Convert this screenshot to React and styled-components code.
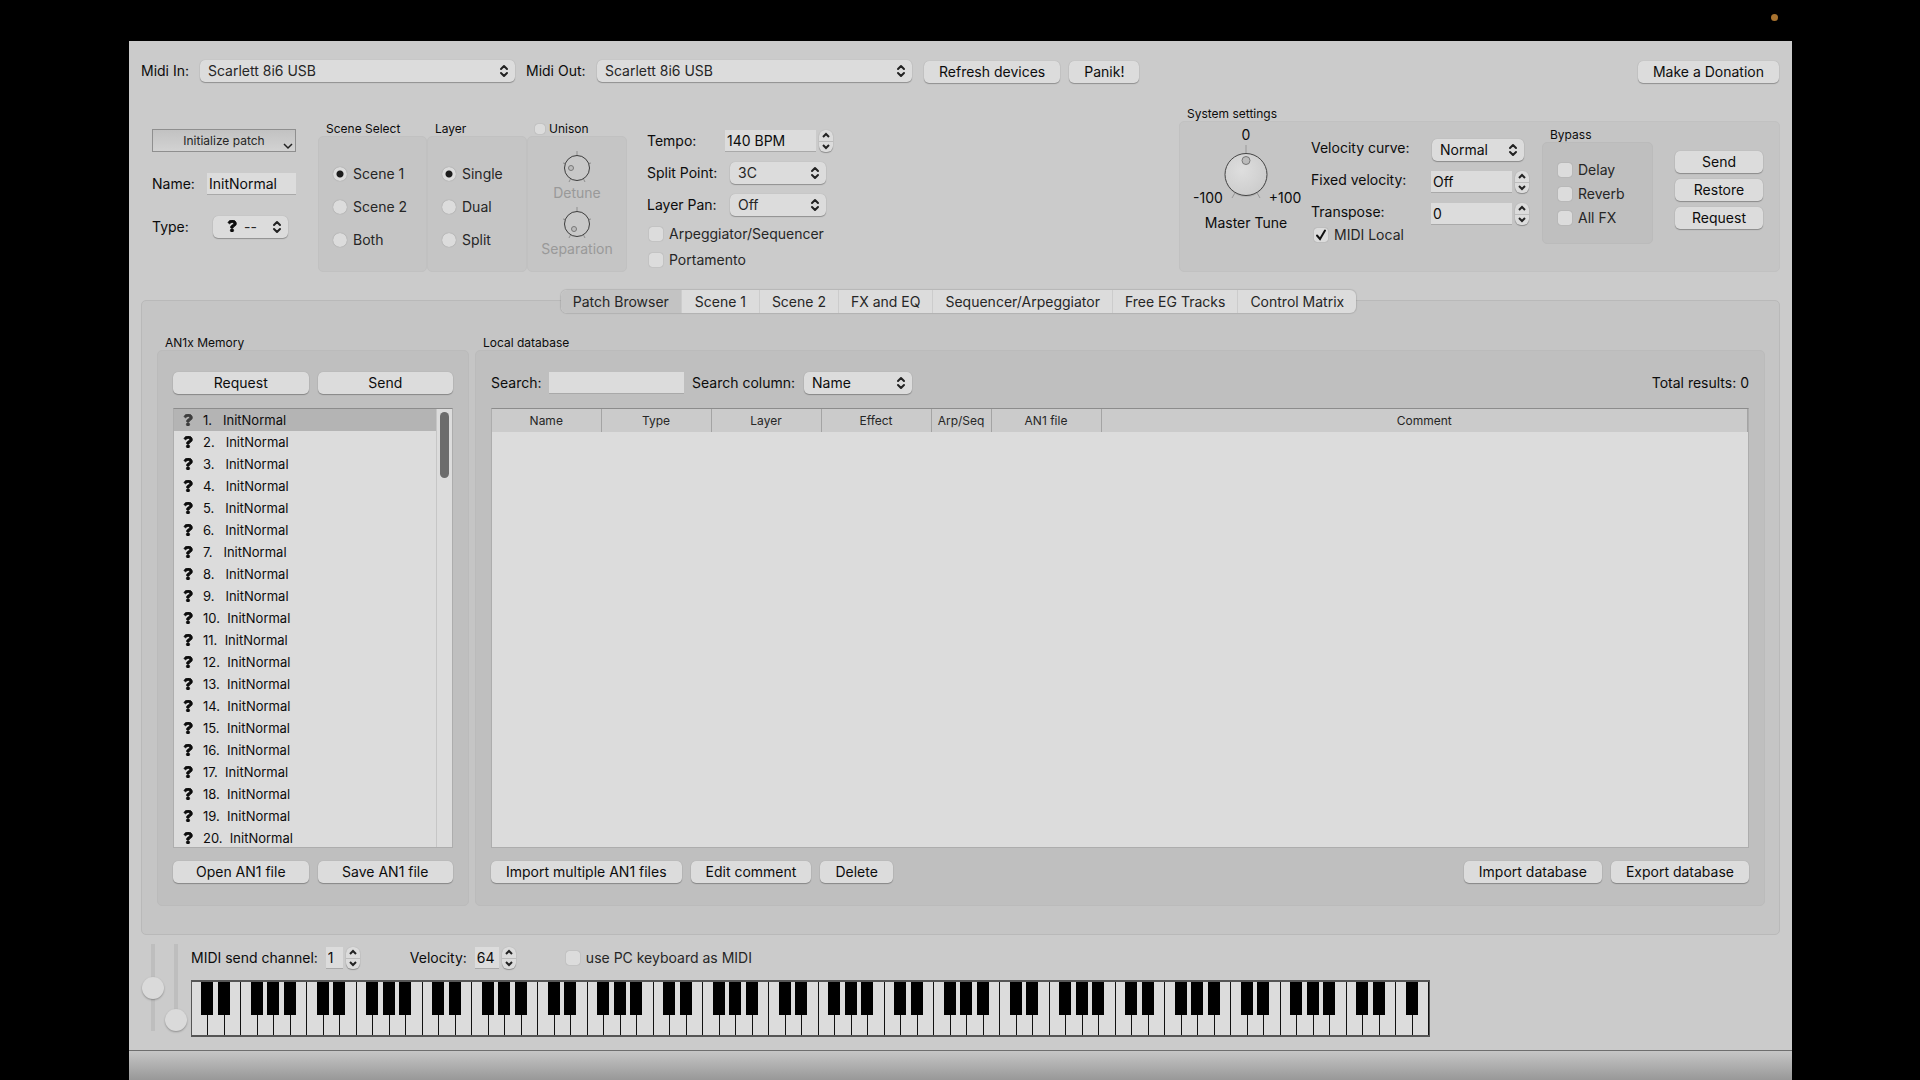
import { useState } from 'react'
import styled, { createGlobalStyle, css } from 'styled-components'
import { FaQuestion } from 'react-icons/fa'

const colors = {
	window: '#cbcbcb',
	panel: '#c5c5c5',
	inner: '#bfbfbf',
	control: '#dcdcdc',
	line: '#b9b9b9',
	text: '#0c0c0c',
	soft: '#262626',
	muted: '#999999'
}

const GlobalStyle = createGlobalStyle`
	* {
		box-sizing: border-box;
	}

	body {
		margin: 0;
		background-color: #000;
		color: ${colors.text};
		font-family: Inter, 'Liberation Sans', sans-serif;
		font-size: 14px;
		line-height: 16px;
	}

	button,
	input,
	select {
		margin: 0;
		color: inherit;
		font: inherit;
	}
`

const Screen = styled.div`
	display: flex;
	flex-direction: column;
	min-height: 100vh;
	padding: 0 128px 0 129px;
`

const MenuBar = styled.header`
	display: flex;
	justify-content: flex-end;
	height: 41px;
	padding: 14px 14px 0 0;
`

const RecordingDot = styled.span`
	width: 7px;
	height: 7px;
	border-radius: 50%;
	background-color: #a8722f;
`

const Window = styled.main`
	flex: 1;
	display: flex;
	flex-direction: column;
	background-color: ${colors.window};
`

const raised = css`
	border: 0;
	border-radius: 5px;
	background-color: ${colors.control};
	box-shadow: 0 1px 1px rgba(0, 0, 0, 0.28), 0 0 1px rgba(0, 0, 0, 0.2);
`

const Button = styled.button`
	${raised}
	height: 22px;
	padding: 0 15px;
	white-space: nowrap;
`

const Toolbar = styled.div`
	display: flex;
	align-items: center;
	padding: 18px 13px 0 12px;

	${Button} {
		margin: 2px 0 0 9px;
	}

	${Button}:last-child {
		margin-left: auto;
	}
`

const ToolbarLabel = styled.label`
	min-width: ${({ $width }) => $width}px;
`

const SelectBox = styled.span`
	position: relative;
	display: inline-flex;
	width: ${({ $width }) => $width}px;
	margin-left: ${({ $indent = 0 }) => $indent}px;
	margin-right: ${({ $after = 0 }) => $after}px;

	svg {
		position: absolute;
		top: 4px;
		right: 6px;
		pointer-events: none;
	}
`

const NativeSelect = styled.select`
	${raised}
	appearance: none;
	width: 100%;
	height: 22px;
	padding: 0 8px;
	color: ${({ $dark }) => ($dark ? colors.text : colors.soft)};
`

const TypeIcon = styled.span`
	position: absolute;
	top: 4px;
	left: 13px;
	display: flex;
	pointer-events: none;

	svg {
		position: static;
	}

	& + select {
		padding-left: 31px;
	}
`

const Unknown = styled(FaQuestion).attrs({ size: 12 })`
	stroke: currentColor;
	stroke-width: 36px;
`

const UpDown = () => (
	<svg width="10" height="14" viewBox="0 0 10 14" fill="none" stroke="#222" strokeWidth="2" strokeLinecap="round" strokeLinejoin="round">
		<path d="M2 5 5 2l3 3M2 9l3 3 3-3" />
	</svg>
)

const Select = ({ id, options, width, indent, after, dark, icon }) => (
	<SelectBox $width={width} $indent={indent} $after={after}>
		{icon && <TypeIcon><Unknown /></TypeIcon>}
		<NativeSelect id={id} $dark={dark}>
			{options.map(option => <option key={option}>{option}</option>)}
		</NativeSelect>
		<UpDown />
	</SelectBox>
)

const TextInput = styled.input`
	width: ${({ $width }) => $width}px;
	height: 22px;
	padding: 0 2px;
	border: 0;
	border-bottom: 1px solid #a9a9a9;
	background-color: ${colors.control};
`

const SpinBox = styled.span`
	display: inline-flex;
	gap: 3px;
`

const Stepper = styled.span`
	${raised}
	display: flex;
	flex-direction: column;
	width: 14px;
	height: 22px;
	border-radius: 6px;

	button {
		flex: 1;
		display: flex;
		align-items: center;
		justify-content: center;
		padding: 0;
		border: 0;
		background: none;
	}

	button + button {
		border-top: 1px solid #bcbcbc;
	}
`

const Spin = ({ id, value, width }) => (
	<SpinBox>
		<TextInput id={id} defaultValue={value} $width={width} />
		<Stepper>
			<button aria-label="Increase">
				<svg width="8" height="6" viewBox="0 0 8 6" fill="none" stroke="#222" strokeWidth="2">
					<path d="M1 5l3-3 3 3" />
				</svg>
			</button>
			<button aria-label="Decrease">
				<svg width="8" height="6" viewBox="0 0 8 6" fill="none" stroke="#222" strokeWidth="2">
					<path d="M1 1l3 3 3-3" />
				</svg>
			</button>
		</Stepper>
	</SpinBox>
)

const Tick = styled.input`
	appearance: none;
	flex: none;
	width: ${({ $size = 14 }) => $size}px;
	height: ${({ $size = 14 }) => $size}px;
	border-radius: ${({ type }) => (type === 'radio' ? '50%' : '3px')};
	background-color: ${colors.control};
	box-shadow: 0 0 1px rgba(0, 0, 0, 0.35);

	&[type='radio']:checked {
		background-image: radial-gradient(circle, #1c1c1c 3px, transparent 4px);
	}

	&[type='checkbox']:checked {
		background-image: url("data:image/svg+xml,%3Csvg xmlns='http://www.w3.org/2000/svg' viewBox='0 0 14 14'%3E%3Cpath d='M3 7.5l3 3.5 5-8.5' fill='none' stroke='%23111' stroke-width='2' stroke-linecap='round'/%3E%3C/svg%3E");
	}
`

const TickLabel = styled.label`
	display: flex;
	align-items: center;
	gap: 6px;
	color: ${colors.soft};
	white-space: nowrap;
`

const Group = styled.section`
	display: flex;
	flex-direction: column;
	width: ${({ $width }) => ($width ? `${$width}px` : 'auto')};
	flex: ${({ $grow }) => ($grow ? '1' : 'none')};
	min-width: 0;
`

const GroupTitle = styled.div`
	padding-left: 8px;
	font-size: 12px;
	line-height: 15px;
`

const GroupToggle = styled(TickLabel)`
	gap: 4px;
	padding-left: 8px;
	color: ${colors.text};
	font-size: 12px;
	line-height: 15px;
`

const GroupPanel = styled.div`
	flex: 1 0 auto;
	border: 1px solid ${({ $deep }) => ($deep ? '#bbbbbb' : '#c1c1c1')};
	border-radius: 5px;
	background-color: ${({ $deep }) => ($deep ? colors.inner : colors.panel)};
`

const PatchSection = styled.div`
	display: flex;
	align-items: flex-end;
	padding: 23px 12px 0 23px;
`

const PatchForm = styled.div`
	display: grid;
	grid-template-columns: 55px 89px;
	row-gap: 21px;
	align-items: center;
	margin-right: 22px;
	padding-bottom: 34px;
`

const PatchMenu = styled.button`
	grid-column: 1 / -1;
	display: grid;
	grid-template-columns: 1fr auto 1fr;
	align-items: center;
	height: 23px;
	padding: 0 2px;
	border: 1px solid #8f8f8f;
	background: linear-gradient(#c2c2c2, #d2d2d2);
	color: ${colors.soft};
	font-size: 12px;

	svg {
		justify-self: end;
		align-self: end;
		margin-bottom: 1px;
	}
`

const RadioPanel = styled(GroupPanel)`
	display: flex;
	flex-direction: column;
	gap: 17px;
	height: 136px;
	padding: 29px 14px 0;
`

const UnisonPanel = styled(GroupPanel)`
	display: flex;
	flex-direction: column;
	align-items: center;
	gap: 2px;
	height: 136px;
	padding-top: 14px;
	color: ${colors.muted};
`

const DialLabel = styled.span`
	padding-bottom: 4px;
`

const PerformanceForm = styled.div`
	display: flex;
	flex-direction: column;
	gap: 10px;
	margin-left: 20px;
	padding-bottom: 4px;

	${TickLabel} {
		margin-left: 2px;
	}
`

const Field = styled.div`
	display: grid;
	grid-template-columns: ${({ $label }) => $label}px auto;
	align-items: center;
	justify-content: start;
`

const SystemGroup = styled(Group)`
	margin-left: auto;
`

const SystemPanel = styled(GroupPanel)`
	display: flex;
	align-items: flex-start;
	height: 151px;
	padding: 5px 16px 0 12px;
`

const TuneBox = styled.div`
	display: grid;
	grid-template-columns: 32px 44px 34px;
	align-items: end;
	justify-items: center;
	margin-right: 9px;
`

const TuneText = styled.span`
	grid-column: ${({ $wide }) => ($wide ? '1 / -1' : 'auto')};
	padding-top: ${({ $below }) => ($below ? 9 : 0)}px;
	padding-right: ${({ $wide }) => ($wide ? 2 : 0)}px;
`

const SystemForm = styled.div`
	display: flex;
	flex-direction: column;
	gap: 10px;
	padding-top: 12px;

	${Field} > label {
		padding-bottom: 4px;
	}

	${TickLabel} {
		margin: -8px 0 0 3px;
	}
`

const BypassGroup = styled(Group)`
	margin-left: 13px;
`

const BypassPanel = styled(GroupPanel)`
	display: flex;
	flex-direction: column;
	gap: 8px;
	height: 102px;
	padding: 19px 15px;
`

const ButtonStack = styled.div`
	display: flex;
	flex-direction: column;
	gap: 6px;
	width: 88px;
	margin-left: 22px;
	padding-top: 24px;

	${Button} {
		padding: 0;
	}
`

const TabBar = styled.nav`
	z-index: 1;
	align-self: center;
	display: flex;
	height: 23px;
	margin: 18px 4px 0 0;
	border-radius: 6px;
	overflow: hidden;
	background-color: ${colors.control};
	box-shadow: 0 0 1px 1px rgba(0, 0, 0, 0.1);
`

const Tab = styled.button`
	min-width: 78px;
	padding: 0 12px;
	border: 0;
	border-right: 1px solid #cccccc;
	background-color: ${({ $active }) => ($active ? '#c3c3c3' : 'transparent')};
	color: ${colors.soft};
	white-space: nowrap;

	&:last-child {
		border-right: 0;
	}
`

const TabPane = styled.div`
	flex: 1;
	display: flex;
	gap: 6px;
	margin: -13px 12px 0 12px;
	padding: 34px 14px 28px 15px;
	border: 1px solid ${colors.line};
	border-radius: 5px;
	background-color: ${colors.panel};
`

const BrowserPanel = styled(GroupPanel)`
	display: flex;
	flex-direction: column;
	padding: 21px 15px 22px;
`

const ButtonRow = styled.div`
	display: flex;
	gap: 9px;
`

const EvenRow = styled(ButtonRow)`
	${Button} {
		flex: 1;
		padding: 0;
	}
`

const listing = css`
	flex: 1;
	margin: 14px 0 13px;
	border: 1px solid #adadad;
	border-top-color: #8c8c8c;
	background-color: ${colors.control};
`

const MemoryBox = styled.div`
	${listing}
	display: flex;
	overflow: hidden;
`

const MemoryList = styled.ol`
	flex: 1;
	height: 438px;
	margin: 0;
	padding: 0;
	overflow: hidden;
	list-style: none;
	font-size: 13px;
`

const MemoryItem = styled.li`
	display: flex;
	align-items: center;
	height: 22px;
	padding-left: 8px;
	background-color: ${({ $selected }) => ($selected ? '#b4b4b4' : 'transparent')};
	white-space: pre;

	svg {
		margin-right: 9px;
		opacity: ${({ $selected }) => ($selected ? 0.7 : 1)};
	}
`

const ScrollTrack = styled.div`
	width: 16px;
	padding: 3px;
	border-left: 1px solid #c6c6c6;
`

const ScrollThumb = styled.div`
	width: 9px;
	height: 66px;
	border-radius: 5px;
	background-color: #6c6c6c;
`

const SearchRow = styled.div`
	display: flex;
	align-items: center;
	height: 22px;
`

const SearchLabel = styled.label`
	width: ${({ $width }) => $width}px;
	margin-left: ${({ $before = 0 }) => $before}px;
	white-space: nowrap;
`

const Total = styled.output`
	margin-left: auto;
`

const TableBox = styled.div`
	${listing}
`

const ResultTable = styled.table`
	width: 100%;
	border-collapse: collapse;
	table-layout: fixed;
	font-size: 12px;

	tr {
		height: 23px;
		background-color: ${colors.window};
	}

	th {
		padding: 0;
		border-right: 1px solid #a4a4a4;
		color: ${colors.soft};
		font-weight: 400;
	}
`

const Column = styled.col`
	width: ${({ $width }) => ($width ? `${$width}px` : 'auto')};
`

const Spacer = styled.span`
	flex: 1;
`

const Performer = styled.footer`
	display: flex;
	gap: 1px;
	padding: 9px 13px 13px;
`

const Wheel = styled.input`
	appearance: none;
	writing-mode: vertical-lr;
	direction: rtl;
	width: 22px;
	height: 87px;
	background: linear-gradient(#bebebe, #bebebe) center / 4px 100% no-repeat;

	&::-webkit-slider-thumb {
		appearance: none;
		width: 22px;
		height: 22px;
		border-radius: 50%;
		background-color: #dadada;
		box-shadow: 0 1px 2px rgba(0, 0, 0, 0.3);
	}
`

const KeyboardColumn = styled.div`
	display: flex;
	flex-direction: column;
	gap: 11px;
	padding: 3px 0 0 3px;
`

const KeyboardOptions = styled.div`
	display: flex;
	align-items: center;
	gap: 50px;
`

const InlineField = styled.div`
	display: flex;
	align-items: center;
	gap: 8px;
`

const Keys = styled.div`
	display: grid;
	grid-template-columns: repeat(75, 1fr);
	width: 1239px;
	height: 57px;
	border: 1px solid #555;
	border-width: 2px 1px 2px 1px;
	background-color: ${colors.control};
`

const KeySlot = styled.div`
	position: relative;
	display: flex;
`

const WhiteKey = styled.button`
	flex: 1;
	padding: 0;
	border: 0;
	border-right: 1px solid #111;
	background: none;
`

const BlackKey = styled.button`
	position: absolute;
	z-index: 1;
	top: 0;
	right: -5px;
	width: 12px;
	height: 33px;
	padding: 0;
	border: 0;
	background-color: #000;
`

const StatusBar = styled.div`
	height: 30px;
	border-top: 1px solid #6e6e6e;
	background: linear-gradient(#c6c6c6, #989898);
`

const SmallDial = ({ x, y }) => (
	<svg width="30" height="32" viewBox="0 0 30 32" fill="none" stroke="#8f8f8f">
		<path d="M15 0v4M1 12l4 1M29 12l-4 1M7 31l2-4M23 31l-2-4" />
		<circle cx="15" cy="17" r="12.5" fill="#c8c8c8" stroke="#3c3c3c" />
		<circle cx={x} cy={y} r="2.5" fill="#bcbcbc" stroke="#777" />
	</svg>
)

const TuneDial = () => (
	<svg width="44" height="63" viewBox="0 0 44 63">
		<defs>
			<radialGradient id="knob" cx="0.4" cy="0.4" r="0.65">
				<stop offset="0" stopColor="#dedede" />
				<stop offset="1" stopColor="#cccccc" />
			</radialGradient>
		</defs>
		<path d="M22 2v8M8 55l4-7M36 55l-4-7" stroke="#999" />
		<circle cx="22" cy="33" r="21" fill="#a9a9a9" opacity="0.6" />
		<circle cx="22" cy="31.5" r="21" fill="url(#knob)" stroke="#444" />
		<circle cx="22" cy="17.5" r="4" fill="#bbb" stroke="#777" />
	</svg>
)

const tabs = [
	'Patch Browser',
	'Scene 1',
	'Scene 2',
	'FX and EQ',
	'Sequencer/Arpeggiator',
	'Free EG Tracks',
	'Control Matrix'
]

const columns = [
	['Name', 109],
	['Type', 110],
	['Layer', 110],
	['Effect', 110],
	['Arp/Seq', 60],
	['AN1 file', 110],
	['Comment', null]
]

const memory = Array.from({ length: 20 }, (_, i) => i + 1)

const RadioGroup = ({ title, name, options, width }) => (
	<Group $width={width}>
		<GroupTitle>{title}</GroupTitle>
		<RadioPanel>
			{options.map((option, i) => (
				<TickLabel key={option}>
					<Tick type="radio" name={name} defaultChecked={i === 0} />
					{option}
				</TickLabel>
			))}
		</RadioPanel>
	</Group>
)

const Check = ({ label, checked }) => (
	<TickLabel>
		<Tick type="checkbox" defaultChecked={checked} />
		{label}
	</TickLabel>
)

// The keyboard covers the whole MIDI range, from C to the G ten octaves up
const hasSharp = i => i < 74 && ![2, 6].includes(i % 7)

export default () => {
	const [tab, setTab] = useState(tabs[0])

	return (
		<>
			<GlobalStyle />
			<Screen>
				<MenuBar>
					<RecordingDot />
				</MenuBar>
				<Window>
					<Toolbar>
						<ToolbarLabel htmlFor="midi-in" $width={59}>Midi In:</ToolbarLabel>
						<Select id="midi-in" options={['Scarlett 8i6 USB']} width={315} after={11} />
						<ToolbarLabel htmlFor="midi-out" $width={71}>Midi Out:</ToolbarLabel>
						<Select id="midi-out" options={['Scarlett 8i6 USB']} width={315} after={3} />
						<Button>Refresh devices</Button>
						<Button>Panik!</Button>
						<Button>Make a Donation</Button>
					</Toolbar>

					<PatchSection>
						<PatchForm>
							<PatchMenu>
								<span />
								Initialize patch
								<svg width="10" height="7" viewBox="0 0 10 7" fill="none" stroke="#222" strokeWidth="1.5">
									<path d="M1 1l4 4 4-4" />
								</svg>
							</PatchMenu>
							<label htmlFor="patch-name">Name:</label>
							<TextInput id="patch-name" defaultValue="InitNormal" $width={89} />
							<label htmlFor="patch-type">Type:</label>
							<Select id="patch-type" options={['--']} width={75} indent={6} icon />
						</PatchForm>

						<RadioGroup title="Scene Select" name="scene" options={['Scene 1', 'Scene 2', 'Both']} width={109} />
						<RadioGroup title="Layer" name="layer" options={['Single', 'Dual', 'Split']} width={100} />
						<Group $width={100}>
							<GroupToggle>
								<Tick type="checkbox" $size={10} />
								Unison
							</GroupToggle>
							<UnisonPanel>
								<SmallDial x={9} y={17} />
								<DialLabel>Detune</DialLabel>
								<SmallDial x={12} y={22} />
								<DialLabel>Separation</DialLabel>
							</UnisonPanel>
						</Group>

						<PerformanceForm>
							<Field $label={78}>
								<label htmlFor="tempo">Tempo:</label>
								<Spin id="tempo" value="140 BPM" width={91} />
							</Field>
							<Field $label={78}>
								<label htmlFor="split-point">Split Point:</label>
								<Select id="split-point" options={['3C']} width={96} indent={5} />
							</Field>
							<Field $label={78}>
								<label htmlFor="layer-pan">Layer Pan:</label>
								<Select id="layer-pan" options={['Off']} width={96} indent={5} />
							</Field>
							<Check label="Arpeggiator/Sequencer" />
							<Check label="Portamento" />
						</PerformanceForm>

						<SystemGroup>
							<GroupTitle>System settings</GroupTitle>
							<SystemPanel>
								<TuneBox>
									<TuneText $wide>0</TuneText>
									<TuneText>-100</TuneText>
									<TuneDial />
									<TuneText>+100</TuneText>
									<TuneText $wide $below>Master Tune</TuneText>
								</TuneBox>
								<SystemForm>
									<Field $label={120}>
										<label htmlFor="curve">Velocity curve:</label>
										<Select id="curve" options={['Normal']} width={92} indent={1} dark />
									</Field>
									<Field $label={120}>
										<label htmlFor="fixed">Fixed velocity:</label>
										<Spin id="fixed" value="Off" width={81} />
									</Field>
									<Field $label={120}>
										<label htmlFor="transpose">Transpose:</label>
										<Spin id="transpose" value="0" width={81} />
									</Field>
									<Check label="MIDI Local" checked />
								</SystemForm>
								<BypassGroup $width={111}>
									<GroupTitle>Bypass</GroupTitle>
									<BypassPanel $deep>
										<Check label="Delay" />
										<Check label="Reverb" />
										<Check label="All FX" />
									</BypassPanel>
								</BypassGroup>
								<ButtonStack>
									<Button>Send</Button>
									<Button>Restore</Button>
									<Button>Request</Button>
								</ButtonStack>
							</SystemPanel>
						</SystemGroup>
					</PatchSection>

					<TabBar>
						{tabs.map(name => (
							<Tab key={name} $active={name === tab} onClick={() => setTab(name)}>
								{name}
							</Tab>
						))}
					</TabBar>
					<TabPane>
						<Group $width={312}>
							<GroupTitle>AN1x Memory</GroupTitle>
							<BrowserPanel $deep>
								<EvenRow>
									<Button>Request</Button>
									<Button>Send</Button>
								</EvenRow>
								<MemoryBox>
									<MemoryList>
										{memory.map(n => (
											<MemoryItem key={n} $selected={n === 1}>
												<Unknown />
												{n < 10 ? `${n}.   InitNormal` : `${n}.  InitNormal`}
											</MemoryItem>
										))}
									</MemoryList>
									<ScrollTrack>
										<ScrollThumb />
									</ScrollTrack>
								</MemoryBox>
								<EvenRow>
									<Button>Open AN1 file</Button>
									<Button>Save AN1 file</Button>
								</EvenRow>
							</BrowserPanel>
						</Group>

						<Group $grow>
							<GroupTitle>Local database</GroupTitle>
							<BrowserPanel $deep>
								<SearchRow>
									<SearchLabel htmlFor="search" $width={58}>Search:</SearchLabel>
									<TextInput id="search" $width={135} />
									<SearchLabel htmlFor="search-column" $width={112} $before={8}>Search column:</SearchLabel>
									<Select id="search-column" options={['Name']} width={108} dark />
									<Total>Total results: 0</Total>
								</SearchRow>
								<TableBox>
									<ResultTable>
										<colgroup>
											{columns.map(([name, width]) => <Column key={name} $width={width} />)}
										</colgroup>
										<thead>
											<tr>
												{columns.map(([name]) => <th key={name}>{name}</th>)}
											</tr>
										</thead>
									</ResultTable>
								</TableBox>
								<ButtonRow>
									<Button>Import multiple AN1 files</Button>
									<Button>Edit comment</Button>
									<Button>Delete</Button>
									<Spacer />
									<Button>Import database</Button>
									<Button>Export database</Button>
								</ButtonRow>
							</BrowserPanel>
						</Group>
					</TabPane>

					<Performer>
						<Wheel type="range" aria-label="Pitch" defaultValue={50} />
						<Wheel type="range" aria-label="Modulation" defaultValue={0} />
						<KeyboardColumn>
							<KeyboardOptions>
								<InlineField>
									<label htmlFor="channel">MIDI send channel:</label>
									<Spin id="channel" value="1" width={17} />
								</InlineField>
								<InlineField>
									<label htmlFor="velocity">Velocity:</label>
									<Spin id="velocity" value="64" width={24} />
								</InlineField>
								<Check label="use PC keyboard as MIDI" />
							</KeyboardOptions>
							<Keys>
								{Array.from({ length: 75 }, (_, i) => (
									<KeySlot key={i}>
										<WhiteKey aria-label={`White key ${i + 1}`} />
										{hasSharp(i) && <BlackKey aria-label={`Black key ${i + 1}`} />}
									</KeySlot>
								))}
							</Keys>
						</KeyboardColumn>
					</Performer>
					<StatusBar />
				</Window>
			</Screen>
		</>
	)
}
